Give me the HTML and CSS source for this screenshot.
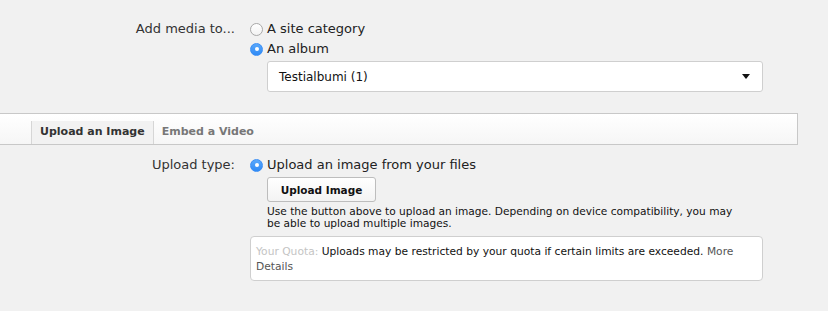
FILE: index.html
```html
<!DOCTYPE html>
<html lang="en">
<head>
    <meta charset="UTF-8">
    <title>Add Media</title>
    <link rel="stylesheet" href="styles.css">
</head>
<body>
    <div class="field first">
        <div class="label">Add media to...</div>
        <div class="control">
            <label class="option"><span class="radio"></span>A site category</label>
            <label class="option"><span class="radio checked"></span>An album</label>
            <div class="select">
                <span>Testialbumi (1)</span>
                <span class="caret"></span>
            </div>
        </div>
    </div>

    <div class="tabs">
        <div class="tab active">Upload an Image</div>
        <div class="tab">Embed a Video</div>
    </div>

    <div class="field upload">
        <div class="label">Upload type:</div>
        <div class="control">
            <label class="option"><span class="radio checked"></span>Upload an image from your files</label>
            <div class="indent">
                <button class="btn">Upload Image</button>
                <p class="help">Use the button above to upload an image. Depending on device compatibility, you may be able to upload multiple images.</p>
            </div>
            <div class="quota">
                <span class="quota-label">Your Quota:</span> Uploads may be restricted by your quota if certain limits are exceeded. <span class="more">More</span> <span class="more">Details</span>
            </div>
        </div>
    </div>
</body>
</html>
```

FILE: styles.css
```css
body {
    margin: 0;
    background-color: #f1f1f1;
    font-family: "DejaVu Sans", Verdana, sans-serif;
    font-size: 13px;
    color: #222;
}
.field {
    display: grid;
    grid-template-columns: 235px 513px;
    column-gap: 15px;
    line-height: 20px;
}
.field.first {
    padding-top: 19px;
}
.field.upload {
    margin-top: 10px;
}
.label {
    text-align: right;
    color: #333;
}
.option {
    display: flex;
    align-items: center;
    gap: 4px;
}
.radio {
    box-sizing: border-box;
    width: 13px;
    height: 13px;
    border-radius: 50%;
    border: 1px solid #a8a8a8;
    background: linear-gradient(#ffffff, #f2f2f2);
    display: flex;
    align-items: center;
    justify-content: center;
}
.radio.checked {
    border-color: #3a8ef5;
    background: linear-gradient(#5aa8fb, #2f8af5);
}
.radio.checked::after {
    content: "";
    width: 4px;
    height: 4px;
    border-radius: 50%;
    background: #fff;
}
.select {
    display: flex;
    justify-content: space-between;
    align-items: center;
    box-sizing: border-box;
    height: 31px;
    margin: 2px 0 0 17px;
    padding: 0 12px 0 11px;
    background: #fff;
    border: 1px solid #cfcfcf;
    border-radius: 3px;
    font-size: 12px;
    color: #111;
}
.caret {
    width: 0;
    height: 0;
    border-left: 4px solid transparent;
    border-right: 4px solid transparent;
    border-top: 5px solid #111;
}
.tabs {
    display: flex;
    align-items: flex-end;
    box-sizing: border-box;
    height: 32px;
    margin: 21px 30px 0 0;
    padding-left: 31px;
    border: 1px solid #c8c8c8;
    border-left: none;
    background: linear-gradient(#ffffff, #f6f6f6);
}
.tab {
    padding: 0 8px 1px;
    line-height: 22px;
    font-size: 11px;
    font-weight: bold;
    color: #777;
}
.tab.active {
    color: #333;
    background: #f2f2f2;
    border-left: 1px solid #d6d6d6;
    border-right: 1px solid #d6d6d6;
}
.indent {
    padding-left: 17px;
}
.btn {
    display: block;
    box-sizing: border-box;
    width: 109px;
    height: 25px;
    margin-top: 2px;
    font-family: inherit;
    font-size: 10.5px;
    font-weight: bold;
    color: #111;
    background: linear-gradient(#ffffff, #f3f3f3);
    border: 1px solid #bdbdbd;
    border-radius: 3px;
}
.help {
    max-width: 472px;
    margin: 3px 0 0;
    font-size: 10.6px;
    line-height: 12px;
    color: #111;
}
.quota {
    margin-top: 7px;
    padding: 7px 5px 6px;
    background: #fff;
    border: 1px solid #cfcfcf;
    border-radius: 4px;
    font-size: 10.7px;
    line-height: 15px;
    color: #111;
}
.quota-label {
    color: #c4c4c4;
}
.more {
    color: #555;
}
```
